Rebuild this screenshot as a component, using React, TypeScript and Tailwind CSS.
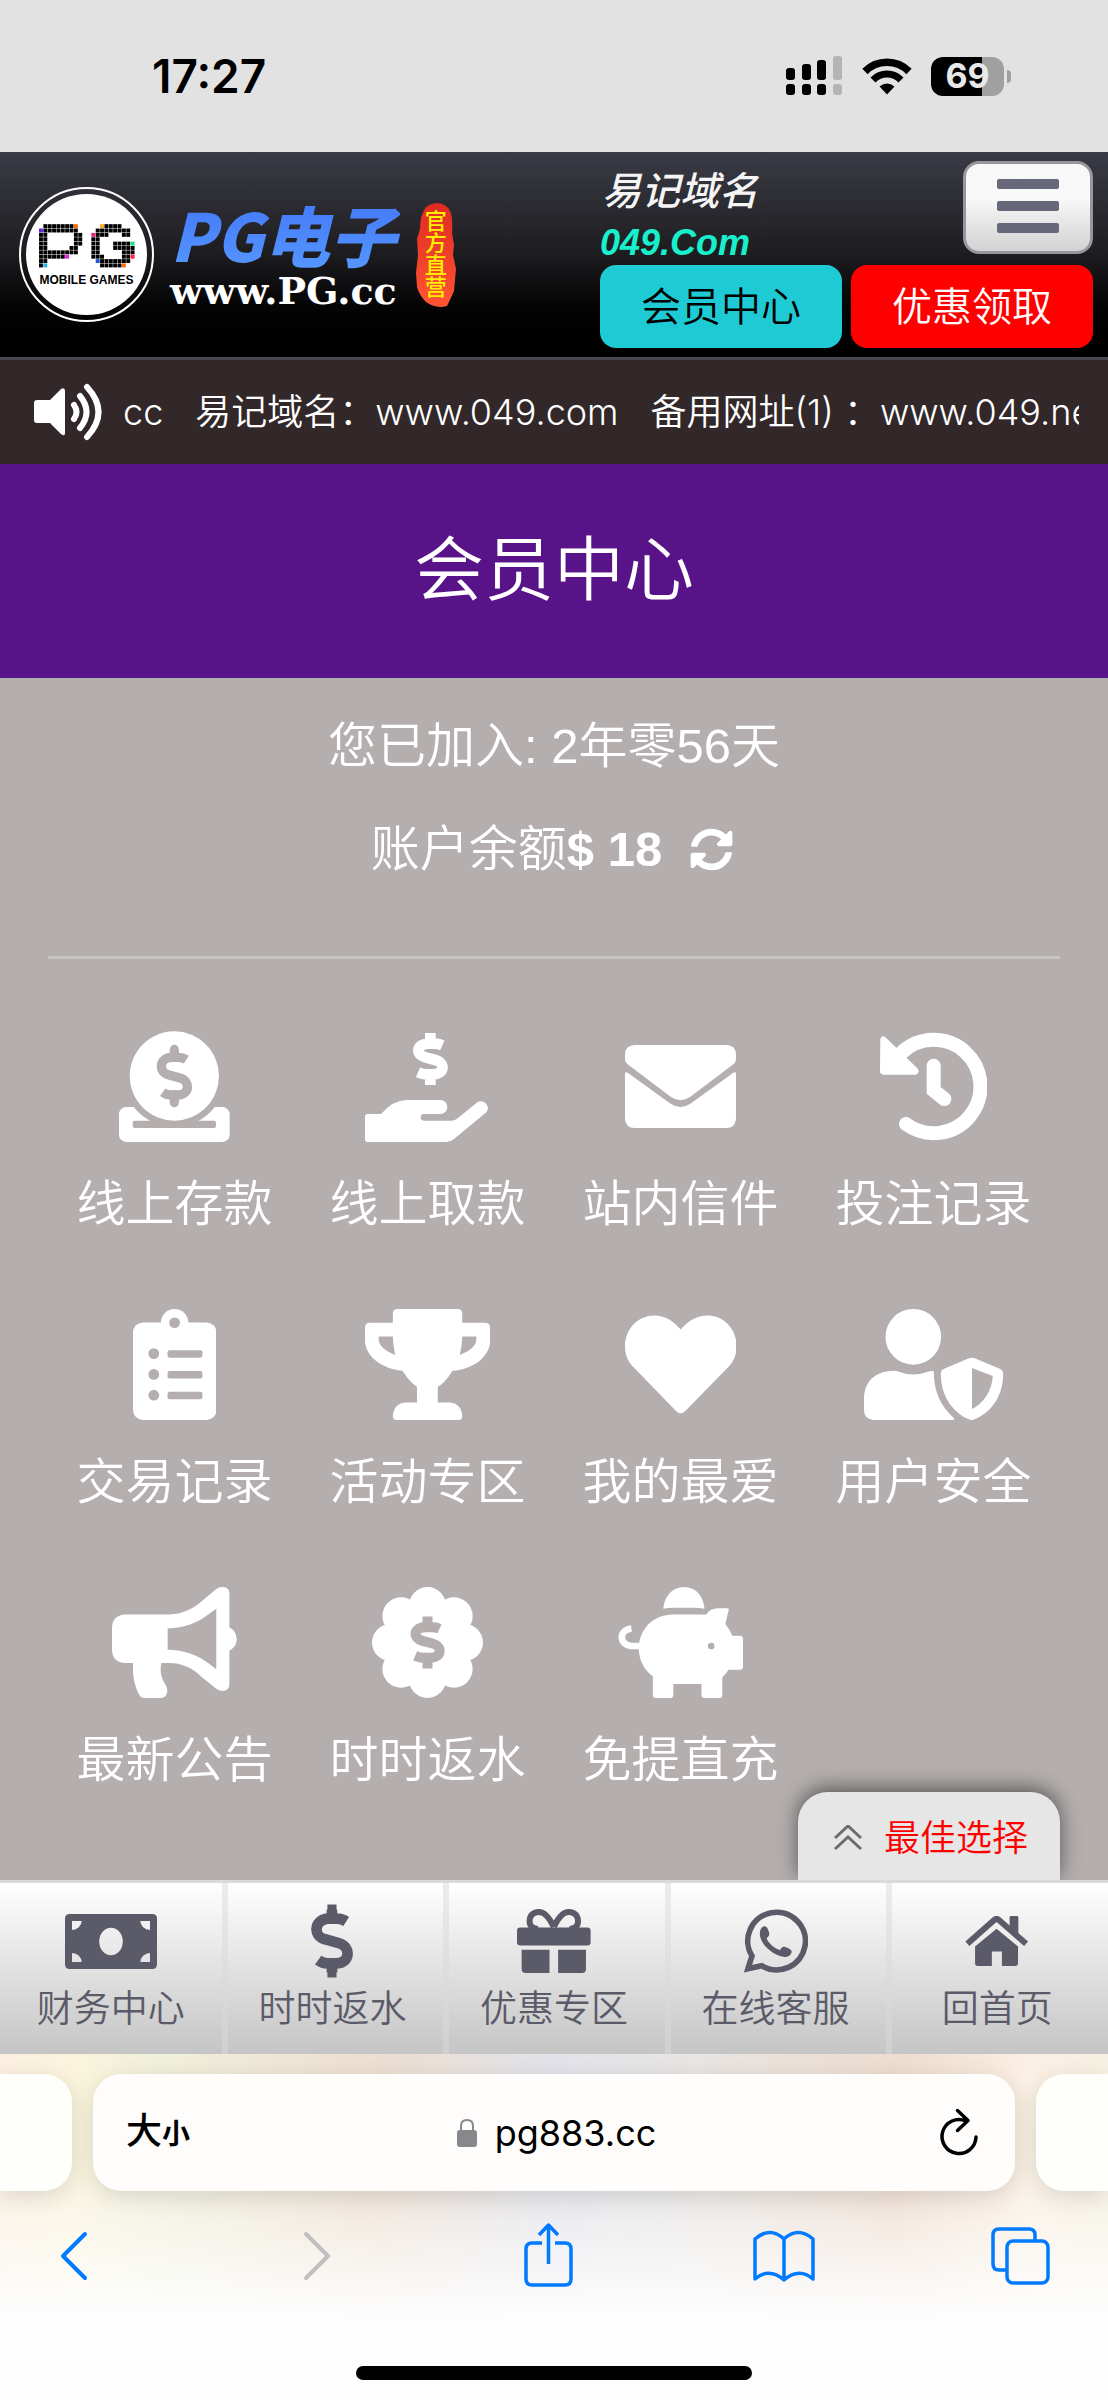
import { useState } from "react";
import { FaSyncAlt } from "react-icons/fa";

const BG = "#b4aeae";

const LIGHT_DOLLAR =
  "M89 44 Q78 37 66 37 H41 C6 42 6 82 35 89 L70 99 C101 107 100 148 66 150 H41 Q29 150 18 142 M53 14 V30 M53 157 V173";
const BOLD_DOLLAR =
  "M89 43 Q78 38 66 38 H48 C12 38 6 70 38 79 L68 87 C100 96 95 130 62 130 H42 Q30 130 16 124 M53 6 V30 M53 138 V162";

const DepositIcon = () => (
  <svg className="h-[111px]" viewBox="0 0 332 333" fill="#fff">
    <rect y="228" width="332" height="105" rx="22" />
    <circle cx="166" cy="135" r="153" fill={BG} />
    <rect x="41" y="269" width="250" height="22" rx="6" fill={BG} />
    <circle cx="166" cy="135" r="134" />
    <path
      d={LIGHT_DOLLAR}
      transform="translate(113 42)"
      fill="none"
      stroke={BG}
      strokeWidth="28"
    />
    <path
      d="M166 54 V80 M166 190 V216"
      stroke={BG}
      strokeWidth="26"
      strokeLinecap="round"
    />
  </svg>
);

const WithdrawIcon = () => (
  <svg className="h-[111px]" viewBox="0 0 373 333" fill="#fff">
    <path
      d={BOLD_DOLLAR}
      transform="translate(143 0)"
      fill="none"
      stroke="#fff"
      strokeWidth="32"
    />
    <path d="M8 249 H48 Q85 207 125 207 H226 A21 21 0 0 1 226 249 H177 A10 10 0 0 0 177 269 H260 Q270 269 278 262 L338 213 A21 21 0 0 1 365 243 L268 323 Q256 333 244 333 H8 Q0 333 0 325 V257 Q0 249 8 249Z" />
  </svg>
);

const MailIcon = () => (
  <svg className="h-[111px]" viewBox="0 0 333 333" fill="#fff">
    <path d="M30 42 H303 Q333 42 333 72 V85 Q333 94 326 99 L195 198 Q166 218 138 198 L7 99 Q0 94 0 85 V72 Q0 42 30 42Z" />
    <path d="M0 128 Q1 121 8 125 L137 218 Q166 238 196 218 L325 125 Q332 121 333 128 V261 Q333 291 303 291 H30 Q0 291 0 261Z" />
  </svg>
);

const HistoryIcon = () => (
  <svg className="h-[111px]" viewBox="0 0 322 333" fill="#fff">
    <path d="M1 25 Q5 10 18 20 L112 112 Q122 124 108 131 H12 Q0 131 0 121Z" />
    <path
      d="M63 67 A140 140 0 1 1 78 279 M161 104 V178 L193 204"
      fill="none"
      stroke="#fff"
      strokeWidth="42"
      strokeLinecap="round"
    />
  </svg>
);

const ClipboardIcon = () => (
  <svg className="h-[111px]" viewBox="0 0 249 331" fill="#fff">
    <rect y="40" width="249" height="291" rx="30" />
    <circle cx="124" cy="41" r="41" />
    <g fill={BG}>
      <circle cx="124" cy="41" r="16" />
      <circle cx="62" cy="133" r="16" />
      <circle cx="62" cy="195" r="16" />
      <circle cx="62" cy="257" r="16" />
      <rect x="103" y="123" width="104" height="22" rx="6" />
      <rect x="103" y="185" width="104" height="22" rx="6" />
      <rect x="103" y="247" width="104" height="22" rx="6" />
    </g>
  </svg>
);

const TrophyIcon = () => (
  <svg className="h-[111px]" viewBox="0 0 373 331" fill="#fff">
    <path
      fillRule="evenodd"
      d="M83 14 Q83 0 97 0 H276 Q290 0 290 14 V41 H358 Q373 41 373 56 V95 C373 140 325 180 261 184 C248 205 232 225 217 232 V279 H250 Q288 281 290 320 Q290 331 280 331 H93 Q83 331 83 320 Q85 281 123 279 H155 V232 C140 222 125 205 112 184 C50 180 0 140 0 95 V56 Q0 41 15 41 H83Z M41 82 H83 Q84 110 90 137 C60 125 41 110 41 92Z M332 82 H290 Q289 110 283 137 C313 125 332 110 332 92Z"
    />
  </svg>
);

const HeartIcon = () => (
  <svg className="h-[111px]" viewBox="0 0 333 331" fill="#fff">
    <path d="M166 61 C143 33 117 19 87 19 C38 19 0 60 0 111 C0 135 8 155 22 170 L150 302 Q166 320 182 302 L311 170 C325 155 333 135 333 111 C333 60 295 19 246 19 C216 19 190 33 166 61Z" />
  </svg>
);

const UserShieldIcon = () => (
  <svg className="h-[111px]" viewBox="0 0 416 331" fill="#fff">
    <circle cx="147" cy="83" r="83" />
    <path d="M80 185 Q95 183 104 187 Q147 204 190 187 Q200 184 208 185 C208 250 230 290 268 325 Q272 331 262 331 H28 Q0 328 0 302 V270 C0 215 35 187 80 185Z" />
    <path
      fillRule="evenodd"
      d="M313 147 Q322 144 330 147 L405 178 Q415 183 415 192 C415 260 380 308 330 329 Q321 333 313 329 C265 308 229 260 229 192 Q229 182 239 178Z M322 176 L384 200 C382 245 355 283 322 298Z"
    />
  </svg>
);

const MegaphoneIcon = () => (
  <svg className="h-[111px]" viewBox="0 0 372 331" fill="#fff">
    <path
      fillRule="evenodd"
      d="M40 82 H170 C215 80 245 62 270 40 L310 7 Q318 0 330 0 Q350 0 350 20 V120 Q372 133 372 155 Q372 178 350 190 V290 Q350 310 330 310 Q318 310 310 303 L270 271 C240 240 205 227 172 227 H147 C142 255 148 275 160 292 Q170 310 160 325 Q155 331 145 331 H97 Q85 331 80 320 C65 290 61 260 63 227 H40 Q0 225 0 185 V124 Q0 84 40 82Z M166 124 C215 122 255 108 290 80 L311 65 V245 L290 229 C255 202 215 188 166 187Z"
    />
  </svg>
);

const RebateIcon = () => (
  <svg className="h-[111px]" viewBox="0 0 332 332" fill="#fff">
    <circle cx="166" cy="166" r="120" />
    <circle cx="166" cy="55" r="55" />
    <circle cx="166" cy="277" r="55" />
    <circle cx="55" cy="166" r="55" />
    <circle cx="277" cy="166" r="55" />
    <circle cx="87" cy="87" r="56" />
    <circle cx="245" cy="87" r="56" />
    <circle cx="87" cy="245" r="56" />
    <circle cx="245" cy="245" r="56" />
    <path
      d={BOLD_DOLLAR}
      transform="translate(113 82)"
      fill="none"
      stroke={BG}
      strokeWidth="30"
    />
  </svg>
);

const PiggyIcon = () => (
  <svg className="h-[111px]" viewBox="0 0 373 331" fill="#fff">
    <path d="M135 65 C138 25 165 0 197 0 C230 0 255 25 258 65 Q240 62 225 62 H165 Q150 62 135 65Z" />
    <path d="M165 82 H263 Q275 63 298 63 H326 Q331 63 330 69 L320 110 Q334 127 341 145 H363 Q373 145 373 155 V237 Q373 247 363 247 H330 Q322 259 311 269 V321 Q311 331 301 331 H259 Q249 331 249 321 V289 H165 V321 Q165 331 155 331 H114 Q104 331 104 321 V267 C77 245 62 218 62 182 C64 125 105 82 165 82Z" />
    <path
      d="M66 176 H40 C2 172 2 128 40 124"
      fill="none"
      stroke="#fff"
      strokeWidth="20"
    />
    <circle cx="278" cy="176" r="10" fill={BG} />
  </svg>
);

const CashIcon = () => (
  <svg className="h-[55px]" viewBox="0 0 276 165" fill="currentColor">
    <path
      fillRule="evenodd"
      d="M14 0 H262 Q276 0 276 14 V151 Q276 165 262 165 H14 Q0 165 0 151 V14 Q0 0 14 0Z M21 21 H50 A29 27 0 0 1 21 48Z M255 21 V48 A29 27 0 0 1 226 21Z M21 144 V117 A29 27 0 0 1 50 144Z M255 144 H226 A29 27 0 0 1 255 117Z M138 41 A35 41 0 0 0 138 124 A35 41 0 0 0 138 41Z"
    />
  </svg>
);

const DollarIcon = () => (
  <svg className="h-[74px]" viewBox="0 0 106 187">
    <path d={LIGHT_DOLLAR} fill="none" stroke="currentColor" strokeWidth="27" />
    <path d="M53 1 V30 M53 157 V186" stroke="currentColor" strokeWidth="23" />
  </svg>
);

const GiftIcon = () => (
  <svg className="h-16" viewBox="0 0 222 193" fill="currentColor">
    <rect y="56" width="222" height="54" rx="10" />
    <path d="M14 123 H98 V193 H26 Q14 193 14 181Z M124 123 H208 V181 Q208 193 196 193 H124Z" />
    <path
      d="M111 54 C95 20 80 9 66 9 C46 9 38 22 38 38 C38 52 48 60 64 60 M111 54 C127 20 142 9 156 9 C176 9 184 22 184 38 C184 52 174 60 158 60"
      fill="none"
      stroke="currentColor"
      strokeWidth="18"
    />
  </svg>
);

const WhatsappIcon = () => (
  <svg className="h-16" viewBox="0 0 193 193" fill="currentColor">
    <path
      d="M12 180 L24 142 A87 87 0 1 1 53 171Z"
      fill="none"
      stroke="currentColor"
      strokeWidth="17"
    />
    <path d="M58 53 C66 50 72 56 76 72 C78 80 72 84 68 88 C74 104 92 118 108 124 C112 120 114 112 122 114 C134 118 142 122 144 128 C142 142 128 146 118 144 C86 138 52 108 48 80 C47 66 50 58 58 53Z" />
  </svg>
);

const HomeIcon = () => (
  <svg className="h-[50px]" viewBox="0 0 189 149" fill="currentColor">
    <path
      d="M7 83 L87 12 Q94 6 101 12 L182 83"
      fill="none"
      stroke="currentColor"
      strokeWidth="18"
    />
    <path d="M133 36 V4 Q133 0 137 0 H155 Q159 0 159 4 V60Z" />
    <path d="M30 91 L94 38 L158 91 V141 Q158 149 150 149 H110 V106 H80 V149 H38 Q30 149 30 141Z" />
  </svg>
);

const menuItems = [
  { label: "线上存款", Icon: DepositIcon },
  { label: "线上取款", Icon: WithdrawIcon },
  { label: "站内信件", Icon: MailIcon },
  { label: "投注记录", Icon: HistoryIcon },
  { label: "交易记录", Icon: ClipboardIcon },
  { label: "活动专区", Icon: TrophyIcon },
  { label: "我的最爱", Icon: HeartIcon },
  { label: "用户安全", Icon: UserShieldIcon },
  { label: "最新公告", Icon: MegaphoneIcon },
  { label: "时时返水", Icon: RebateIcon },
  { label: "免提直充", Icon: PiggyIcon },
];

const tabs = [
  { label: "财务中心", Icon: CashIcon },
  { label: "时时返水", Icon: DollarIcon },
  { label: "优惠专区", Icon: GiftIcon },
  { label: "在线客服", Icon: WhatsappIcon },
  { label: "回首页", Icon: HomeIcon },
];

// one character per mosaic tile, letters other than x are coloured tiles
const mosaic = [
  ".xxxxxxxo.....yxxxx...",
  "pxxxxxxxx....xxxxxxxx.",
  "xx......xx..kxxx...xx.",
  "xx......xx..xx........",
  "xx......xx..xx...xxxxg",
  "xx.....xx...xx...xxxxx",
  "xxxxxxxxx...xx.....xxx",
  "xxxxxxm.....xxx....xxr",
  "xx...........bxxxxxxx.",
  "xc............xxxxxo..",
];

const tileColors: Record<string, string> = {
  x: "#000",
  o: "#ff6a00",
  p: "#6a1ee8",
  y: "#ffa81e",
  k: "#e8207a",
  g: "#1ee08a",
  m: "#f01ee0",
  r: "#ff1e3c",
  b: "#1e5ac8",
  c: "#1eb4e8",
};

const StatusBar = () => (
  <div className="flex h-[152px] items-center justify-between bg-[#e2e2e2] pr-[97px] pl-[152px] font-['Inter',sans-serif]">
    <time className="text-[46px] leading-none font-semibold text-black">
      17:27
    </time>
    <div className="flex items-center gap-[19px]">
      <svg width="57" height="40" viewBox="0 0 57 40">
        <g fill="#000">
          <rect x="0" y="12" width="9" height="12" rx="3" />
          <rect x="16" y="8" width="9" height="16" rx="3" />
          <rect x="31" y="4" width="9" height="20" rx="3" />
          <rect x="0" y="28" width="9" height="11" rx="3" />
          <rect x="16" y="28" width="9" height="11" rx="3" />
          <rect x="31" y="28" width="9" height="11" rx="3" />
        </g>
        <g fill="#b4b4b4">
          <rect x="47" y="0" width="9" height="24" rx="3" />
          <rect x="47" y="28" width="9" height="11" rx="3" />
        </g>
      </svg>
      <svg width="50" height="37" viewBox="0 0 100 74" fill="none" stroke="#000">
        <path d="M6 27 A62 62 0 0 1 94 27" strokeWidth="15" />
        <path d="M22 44 A39 39 0 0 1 78 44" strokeWidth="14" />
        <path d="M35 57 Q50 45 65 57 L50 73Z" fill="#000" stroke="none" />
      </svg>
      <div className="flex items-center gap-[3px]">
        <div className="flex h-[39px] w-[73px] items-center justify-center rounded-xl bg-linear-to-r from-black from-70% to-[#a0a0a0] to-70% text-[34px] leading-none font-bold text-[#e8e8e8]">
          69
        </div>
        <div className="h-[13px] w-1 rounded-r-full bg-[#a0a0a0]"></div>
      </div>
    </div>
  </div>
);

const Logo = () => (
  <a href="#" className="flex items-center gap-4">
    <div className="flex size-[135px] items-center justify-center rounded-full border-2 border-white">
      <div className="flex size-[121px] flex-col items-center justify-center gap-[6px] rounded-full bg-white">
        <svg width="96" height="44" viewBox="0 0 220 100">
          {mosaic.map((row, y) =>
            row
              .split("")
              .map((tile, x) =>
                tile === "." ? null : (
                  <rect
                    key={`${x}-${y}`}
                    x={x * 10}
                    y={y * 10}
                    width="9"
                    height="9"
                    fill={tileColors[tile]}
                  />
                )
              )
          )}
        </svg>
        <span className="text-xs leading-[12px] font-bold text-black">
          MOBILE GAMES
        </span>
      </div>
    </div>
    <div className="flex flex-col">
      <span className="bg-linear-to-b from-[#4377f8] to-[#5596ff] bg-clip-text pr-1 font-['Noto_Sans_CJK_SC',sans-serif] text-[66px] leading-[72px] font-black text-transparent italic">
        PG电子
      </span>
      <span className="font-['DejaVu_Serif',serif] text-[38px] leading-[44px] font-bold text-white">
        www.PG.cc
      </span>
    </div>
    <div className="grid w-10 place-items-center">
      <svg
        className="col-start-1 row-start-1"
        width="40"
        height="104"
        viewBox="0 0 40 104"
      >
        <defs>
          <linearGradient id="seal" x1="0" y1="0" x2="0" y2="1">
            <stop offset="0" stopColor="#e02a20" />
            <stop offset="1" stopColor="#ff5534" />
          </linearGradient>
        </defs>
        <path
          fill="url(#seal)"
          d="M20 0 Q30 0 34 8 Q37 14 36 30 L38 42 L37 52 L40 66 L38 88 Q34 97 31 103 Q20 106 10 99 Q3 92 1 84 L0 70 L2 52 L1 36 L4 26 Q4 12 10 4 Q14 1 20 0Z"
        />
      </svg>
      <span className="col-start-1 row-start-1 w-[22px] text-[22px] leading-[22px] font-medium break-all text-[#ffef00]">
        官方直营
      </span>
    </div>
  </a>
);

const Header = () => {
  const [open, setOpen] = useState(false);

  return (
    <header className="flex h-[208px] items-stretch justify-between border-b-[3px] border-[#47474f] bg-linear-to-b from-[#3b3b46] via-[#1d1d20] to-black pr-[15px] pl-[19px]">
      <Logo />
      <div className="flex w-[493px] gap-[9px]">
        <div className="flex flex-1 flex-col pt-3">
          <span className="pl-[2px] text-[39px] leading-[56px] font-medium text-[#f5f5f5] italic">
            易记域名
          </span>
          <span className="text-4xl leading-[45px] font-bold text-[#18efcc] italic">
            049.Com
          </span>
          <a
            href="#"
            className="flex h-[83px] items-center justify-center rounded-2xl bg-[#1ecbd4] text-[40px] font-[350] text-black"
          >
            会员中心
          </a>
        </div>
        <div className="flex flex-1 flex-col gap-[11px] pt-[9px]">
          <button
            type="button"
            aria-label="菜单"
            aria-expanded={open}
            onClick={() => setOpen(!open)}
            className="flex h-[93px] w-[130px] flex-col items-center gap-3 self-end rounded-2xl border-[3px] border-[#96969c] bg-linear-to-b from-[#f8f8f8] from-40% to-[#d2d2d2] pt-[15px]"
          >
            <span className="h-[10px] w-[62px] rounded-xs bg-[#66687a]"></span>
            <span className="h-[10px] w-[62px] rounded-xs bg-[#66687a]"></span>
            <span className="h-[10px] w-[62px] rounded-xs bg-[#66687a]"></span>
          </button>
          <a
            href="#"
            className="flex h-[83px] items-center justify-center rounded-2xl bg-[#ff0000] text-[40px] font-[350] text-white"
          >
            优惠领取
          </a>
        </div>
      </div>
    </header>
  );
};

const Notice = () => (
  <div className="flex h-[104px] items-center gap-[18px] bg-[#322829] pr-[29px] pl-[34px] font-['Inter','Noto_Sans_CJK_SC',sans-serif] text-4xl leading-[60px] font-[350] text-white">
    <svg
      className="shrink-0"
      width="71"
      height="58"
      viewBox="0 0 71 58"
      fill="#fff"
    >
      <path d="M3 17 H16 L27 6 Q31 4 31 8 V50 Q31 54 27 51 L16 40 H3 Q0 40 0 37 V20 Q0 17 3 17Z" />
      <path
        d="M40 22 Q45 29 40 36 M46 13 Q59 29 46 45 M53 4 Q76 29 53 54"
        fill="none"
        stroke="#fff"
        strokeWidth="6"
        strokeLinecap="round"
      />
    </svg>
    <div className="flex flex-1 gap-8 overflow-hidden whitespace-nowrap">
      <span>cc</span>
      <span>易记域名：www.049.com</span>
      <span>备用网址(1) ：www.049.net</span>
    </div>
  </div>
);

const Browser = () => (
  <footer className="bg-[linear-gradient(to_bottom,rgba(253,253,253,0)_30%,#fdfdfd_75%),linear-gradient(to_right,#fbf0e0,#faf4dc_7%,#f1f0db_14%,#eddfd1_34%,#e2e3ea_50%,#e8e5e2_63%,#eedccf_81%,#faf0e3_93%,#f6f1e2)] font-['Inter','Noto_Sans_CJK_SC',sans-serif]">
    <div className="flex gap-[21px] pt-5">
      <div className="h-[117px] w-[72px] rounded-r-[28px] bg-[#fefefb] shadow-[0_6px_24px_rgba(0,0,0,0.12)]"></div>
      <div className="flex h-[117px] flex-1 items-center justify-between rounded-[28px] bg-[#fefdfb] pr-[34px] pl-[33px] text-black shadow-[0_6px_24px_rgba(0,0,0,0.12)]">
        <button type="button" className="w-[66px] text-left font-medium">
          <span className="text-4xl">大</span>
          <span className="text-[28px] font-bold">小</span>
        </button>
        <button type="button" className="flex items-center gap-[18px] text-4xl">
          <svg width="20" height="29" viewBox="0 0 20 29">
            <rect y="12" width="20" height="17" rx="3" fill="#88888c" />
            <path
              d="M4 13 V8 Q4 2 10 2 Q16 2 16 8 V13"
              fill="none"
              stroke="#88888c"
              strokeWidth="2"
            />
          </svg>
          pg883.cc
        </button>
        <button
          type="button"
          aria-label="刷新"
          className="flex w-[60px] justify-end"
        >
          <svg
            width="44"
            height="50"
            viewBox="0 0 88 100"
            fill="none"
            stroke="#000"
            strokeWidth="7"
            strokeLinecap="round"
            strokeLinejoin="round"
          >
            <path d="M78 58 A34 34 0 1 1 58 26 M41 5 L62 25 L41 45" />
          </svg>
        </button>
      </div>
      <div className="h-[117px] w-[72px] rounded-l-[28px] bg-[#fefefb] shadow-[0_6px_24px_rgba(0,0,0,0.12)]"></div>
    </div>
    <div className="flex justify-between pt-[31px] pr-[47px] pl-[34px] text-[#007aff]">
      <button
        type="button"
        aria-label="后退"
        className="flex w-20 justify-center"
      >
        <svg
          width="62"
          height="66"
          viewBox="0 0 62 66"
          fill="none"
          stroke="currentColor"
          strokeWidth="4"
          strokeLinecap="round"
          strokeLinejoin="round"
        >
          <path d="M42 12 L20 34 L42 56" />
        </svg>
      </button>
      <button
        type="button"
        aria-label="前进"
        disabled
        className="flex w-20 justify-center text-[#bfbfbf]"
      >
        <svg
          width="62"
          height="66"
          viewBox="0 0 62 66"
          fill="none"
          stroke="currentColor"
          strokeWidth="4"
          strokeLinecap="round"
          strokeLinejoin="round"
        >
          <path d="M26 12 L48 34 L26 56" />
        </svg>
      </button>
      <button
        type="button"
        aria-label="分享"
        className="flex w-20 justify-center"
      >
        <svg
          width="62"
          height="66"
          viewBox="0 0 62 66"
          fill="none"
          stroke="currentColor"
          strokeWidth="3.5"
          strokeLinejoin="round"
        >
          <path d="M25 21 H15 Q9 21 9 27 V57 Q9 63 15 63 H48 Q54 63 54 57 V27 Q54 21 48 21 H38 M31.5 42 V4 M22 13 L31.5 3 L41 13" />
        </svg>
      </button>
      <button
        type="button"
        aria-label="书签"
        className="flex w-20 justify-center"
      >
        <svg
          width="62"
          height="66"
          viewBox="0 0 62 66"
          fill="none"
          stroke="currentColor"
          strokeWidth="3.5"
          strokeLinecap="round"
          strokeLinejoin="round"
        >
          <path d="M31 17 Q17 4 2 17 V57 Q16 45 31 58 Q46 45 60 57 V17 Q45 4 31 17 V58" />
        </svg>
      </button>
      <button
        type="button"
        aria-label="标签页"
        className="flex w-20 justify-center"
      >
        <svg
          width="62"
          height="66"
          viewBox="0 0 62 66"
          fill="none"
          stroke="currentColor"
          strokeWidth="3.5"
          strokeLinecap="round"
          strokeLinejoin="round"
        >
          <rect x="17" y="19" width="41" height="42" rx="6" />
          <path d="M45 18 V13 Q45 7 39 7 H9 Q3 7 3 13 V42 Q3 48 9 48 H16" />
        </svg>
      </button>
    </div>
    <div className="flex justify-center pt-[78px] pb-5">
      <div className="h-[14px] w-[396px] rounded-full bg-black"></div>
    </div>
  </footer>
);

const App: React.FC = () => {
  return (
    <div className="flex min-h-screen flex-col font-['Liberation_Sans','Noto_Sans_CJK_SC',sans-serif]">
      <StatusBar />
      <Header />
      <Notice />
      <h1 className="flex h-[214px] items-center justify-center bg-[#591388] text-[70px] font-[350] text-white">
        会员中心
      </h1>
      <main className="relative flex-1 bg-[#b4aeae] px-12 text-white">
        <div className="flex flex-col items-center pt-[38px] text-[49px] leading-[60px] font-[350]">
          <p>您已加入: 2年零56天</p>
          <p className="mt-[43px] flex items-center">
            账户余额<b className="font-bold">$ 18</b>
            <button
              type="button"
              aria-label="刷新余额"
              className="mr-1 ml-[28px]"
            >
              <FaSyncAlt className="size-[43px]" />
            </button>
          </p>
        </div>
        <hr className="mt-[77px] border-t-[3px] border-[#c8c4c4]" />
        <ul className="mt-[72px] grid grid-cols-4 gap-y-[75px] text-[49px] leading-[60px] font-[350]">
          {menuItems.map(({ label, Icon }) => (
            <li key={label}>
              <a
                href="#"
                className="flex flex-col items-center gap-8 whitespace-nowrap"
              >
                <Icon />
                {label}
              </a>
            </li>
          ))}
        </ul>
        <button
          type="button"
          className="absolute right-12 bottom-0 flex h-[88px] items-center gap-[22px] rounded-t-[30px] bg-[#e6e6e6] pt-[6px] pr-8 pl-9 text-4xl font-[350] text-[#ff0000] shadow-[0_-4px_20px_rgba(0,0,0,0.5)]"
        >
          <svg
            width="28"
            height="28"
            viewBox="0 0 28 28"
            fill="none"
            stroke="#6c6c6c"
            strokeWidth="3"
          >
            <path d="M1 13 L14 1 L27 13 M1 24 L14 12 L27 24" />
          </svg>
          最佳选择
        </button>
      </main>
      <nav className="relative grid h-[174px] grid-cols-5 border-t-[3px] border-[#dadada] bg-linear-to-b from-white to-[#c5c5c6] text-[37px] leading-[54px] font-[350] text-[#5b5a68]">
        {tabs.map(({ label, Icon }, i) => (
          <a
            key={label}
            href="#"
            className={
              i === 0
                ? "flex flex-col items-center"
                : "flex flex-col items-center shadow-[inset_6px_0_0_rgba(217,217,217,0.5)]"
            }
          >
            <span className="flex h-[100px] items-center justify-center pt-4">
              <Icon />
            </span>
            {label}
          </a>
        ))}
      </nav>
      <Browser />
    </div>
  );
};

export default App;
